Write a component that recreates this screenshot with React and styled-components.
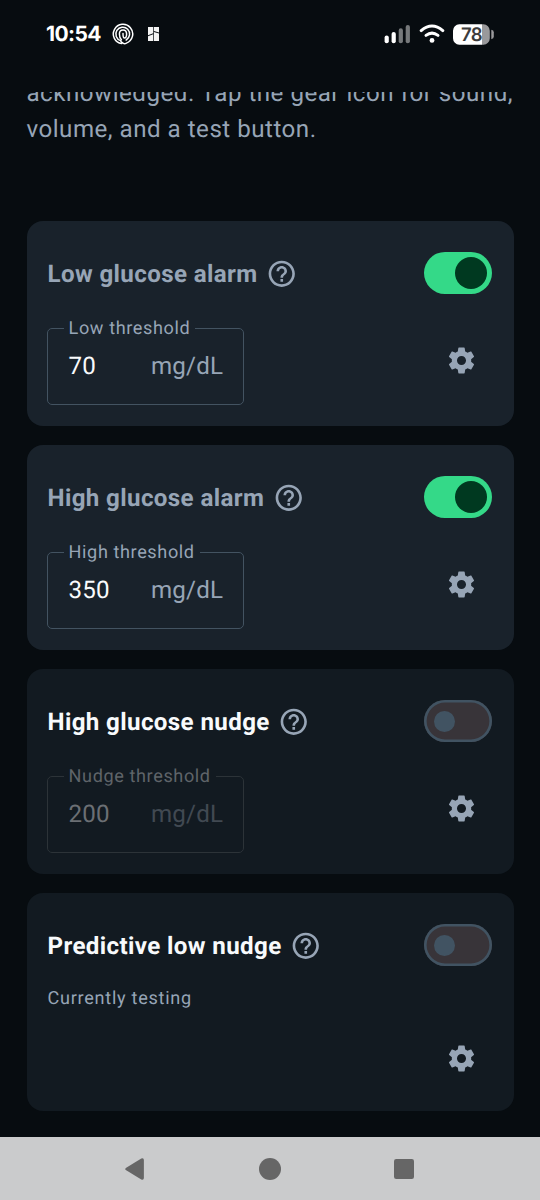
import React from "react";
import styled, { createGlobalStyle } from "styled-components";
import { MdHelpOutline } from "react-icons/md";

const GlobalStyle = createGlobalStyle`
  * { box-sizing: border-box; }
  body {
    margin: 0;
    background: #070c10;
    font-family: Roboto, "Liberation Sans", sans-serif;
    text-rendering: geometricPrecision;
  }
`;

const Screen = styled.div`
  width: 540px;
  height: 1200px;
  display: flex;
  flex-direction: column;
  background: #070c10;
  overflow: hidden;
`;

const StatusBar = styled.header`
  height: 92px;
  flex: none;
  display: flex;
  justify-content: space-between;
  padding: 19px 46px 43px;
`;

const StatusGroup = styled.div`
  display: flex;
  align-items: center;
`;

const Clock = styled.time`
  font-family: Inter, sans-serif;
  font-size: 21px;
  font-weight: 650;
  line-height: 30px;
  width: 65.5px;
  padding-top: 1px;
  letter-spacing: -0.6px;
  color: #fff;
`;

const Content = styled.main`
  flex: 1;
  min-height: 0;
  overflow: hidden;
  padding: 0 26.5px;
`;

const Intro = styled.p`
  margin: -17.5px 0 74.5px;
  font-size: 24.15px;
  line-height: 36px;
  letter-spacing: 0.49px;
  white-space: nowrap;
  color: #97a5b6;
`;

const CardList = styled.div`
  display: flex;
  flex-direction: column;
  gap: 19px;
`;

const Card = styled.section`
  padding: 21px;
  border-radius: 16px;
  background: ${(p) => (p.$on ? "#19222b" : "#121a21")};
`;

const CardHeader = styled.div`
  height: 63px;
  display: flex;
  align-items: center;
  color: #97a5b6;
`;

const Title = styled.h2`
  margin: 1px 8.4px 0 0;
  font-size: 24.15px;
  font-weight: 700;
  line-height: 35px;
  letter-spacing: 0.37px;
  white-space: nowrap;
  color: ${(p) => (p.$on ? "#97a5b6" : "#f8fafc")};
`;

const Track = styled.button`
  margin: 0 0.6px 1px auto;
  border: 0;
  width: 68px;
  height: 42px;
  display: flex;
  align-items: center;
  justify-content: ${(p) => (p.$on ? "flex-end" : "flex-start")};
  padding: ${(p) => (p.$on ? "0 5px" : "0 10.5px")};
  border-radius: 21px;
  background: ${(p) => (p.$on ? "#34d988" : "#383439")};
  box-shadow: ${(p) => (p.$on ? "none" : "inset 0 0 0 2.6px #415362")};
`;

const Thumb = styled.span`
  width: ${(p) => (p.$on ? 32 : 21)}px;
  height: ${(p) => (p.$on ? 32 : 21)}px;
  border-radius: 50%;
  background: ${(p) => (p.$on ? "#003920" : "#415362")};
`;

const CardBody = styled.div`
  margin-top: 11px;
  display: flex;
  align-items: center;
  justify-content: space-between;
`;

const Field = styled.fieldset`
  width: 197px;
  height: 89px;
  margin: 0 0 0 -0.4px;
  padding: 0 20px 0 15.5px;
  border: 1px solid ${(p) => (p.$on ? "#435361" : "#2c3338")};
  border-radius: 5px;
  color: ${(p) => (p.$on ? "#97a5b6" : "#5f6469")};
`;

const FieldLabel = styled.legend`
  padding: 1px 5px 0;
  font-size: 18.1px;
  line-height: 23px;
  letter-spacing: 0.6px;
  white-space: nowrap;
`;

const FieldValue = styled.div`
  display: flex;
  justify-content: space-between;
  padding-left: 5px;
  font-size: 24.15px;
  line-height: 53px;
  letter-spacing: 0.15px;
  color: ${(p) => (p.$on ? "#f8fafc" : "#6b6f74")};
`;

const Unit = styled.span`
  color: ${(p) => (p.$on ? "#97a5b6" : "#414952")};
`;

const GearButton = styled.button`
  width: 63px;
  height: 63px;
  margin-left: auto;
  padding: 0;
  border: 0;
  background: none;
  color: #97a5b6;
  display: grid;
  place-items: center;
`;

const Note = styled.p`
  margin: 10px 0 -21px;
  padding-bottom: 26px;
  font-size: 18.1px;
  line-height: 24px;
  letter-spacing: 0.72px;
  color: #97a5b6;
`;

const NavBar = styled.nav`
  flex: none;
  height: 63px;
  display: flex;
  align-items: center;
  justify-content: center;
  gap: 102px;
  background: #cacbcc;
`;

const Glyph = styled.svg`
  display: block;
  flex: none;
  margin-left: ${(p) => p.$gap || 0}px;
`;

function StatusIcons() {
  return (
    <StatusGroup>
      <Glyph width="26" height="20" viewBox="0 0 26 20" fill="#fff">
        <rect x="0.6" y="11.5" width="4.2" height="7.8" rx="2.1" />
        <rect x="7.6" y="8" width="4.2" height="11.3" rx="2.1" />
        <rect x="14.7" y="4.3" width="4.2" height="15" rx="2.1" opacity=".45" />
        <rect x="21.7" y="1" width="4.2" height="18.3" rx="2.1" opacity=".45" />
      </Glyph>
      <Glyph $gap={8.5} width="26" height="20" viewBox="0 0 26 20" fill="none" stroke="#fff" strokeWidth="3" strokeLinecap="round">
        <path d="M2.2 6.6Q13 -2.6 23.8 6.6" />
        <path d="M7 11.4Q13 6.8 19 11.4" />
        <circle cx="13" cy="16.4" r="2.4" fill="#fff" stroke="none" />
      </Glyph>
      <Glyph $gap={7.5} width="42" height="21" viewBox="0 0 42 21">
        <path d="M7.3 .2H30V20.8H7.3A6.5 6.5 0 0 1 1 14.3V6.7A6.5 6.5 0 0 1 7.3 .2Z" fill="#fff" />
        <path d="M30 .2h1.4A6.5 6.5 0 0 1 37.8 6.7v7.6a6.5 6.5 0 0 1-6.4 6.5H30Z" fill="#99999b" />
        <path d="M39.3 5.8q2.5.5 2.5 2.4v4.6q0 1.9-2.5 2.4Z" fill="#99999b" />
        <text x="19.4" y="17" textAnchor="middle" fontFamily="Inter, sans-serif" fontSize="18.5" fontWeight="600" letterSpacing="-0.8" fill="#3c3c3c">78</text>
      </Glyph>
    </StatusGroup>
  );
}

function NotificationIcons() {
  return (
    <>
      <Glyph width="22" height="22" viewBox="0 0 22 22" fill="none" stroke="#fff" strokeWidth="1.5" strokeLinecap="round">
        <path d="M9.6 20.6A9.7 9.7 0 1 1 14.4 20.1Q12 21.6 10.3 19.6" />
        <path d="M9.6 19.2Q8.8 18.4 8.6 17.6A6.9 6.9 0 1 1 14.2 17" />
        <path d="M9.4 16.8C7.8 15.2 7.4 13.2 7.4 10.9C7.4 8.3 8.6 6.9 11 6.9S14.6 8.5 14.6 11S13.6 15 12.4 15S11 13.4 11 10.4" />
      </Glyph>
      <Glyph $gap={14.5} width="12" height="14" viewBox="0 0 12 14" fill="#f4f4f4">
        <path d="M0 0h5.2v6.2L0 8.2ZM5.9 0H11v5.4L5.9 4ZM0 9.2l5.2-2V14H0ZM5.9 5l5.1 1.5V14H5.9Z" />
      </Glyph>
    </>
  );
}

function GearIcon() {
  return (
    <svg width="31" height="31" viewBox="0 0 24 24" fill="currentColor">
      <path d="M19.43 12.98c.04-.32.07-.64.07-.98s-.03-.66-.07-.98l2.11-1.65c.19-.15.24-.42.12-.64l-2-3.46c-.12-.22-.39-.3-.61-.22l-2.49 1c-.52-.4-1.08-.73-1.69-.98l-.38-2.65C14.46 2.18 14.25 2 14 2h-4c-.25 0-.46.18-.49.42l-.38 2.65c-.61.25-1.17.59-1.69.98l-2.49-1c-.23-.09-.49 0-.61.22l-2 3.46c-.13.22-.07.49.12.64l2.11 1.65c-.04.32-.07.65-.07.98s.03.66.07.98l-2.11 1.65c-.19.15-.24.42-.12.64l2 3.46c.12.22.39.3.61.22l2.49-1c.52.4 1.08.73 1.69.98l.38 2.65c.03.24.24.42.49.42h4c.25 0 .46-.18.49-.42l.38-2.65c.61-.25 1.17-.59 1.69-.98l2.49 1c.23.09.49 0 .61-.22l2-3.46c.12-.22.07-.49-.12-.64l-2.11-1.65zM12 15.5c-1.93 0-3.5-1.57-3.5-3.5s1.57-3.5 3.5-3.5 3.5 1.57 3.5 3.5-1.57 3.5-3.5 3.5z" />
    </svg>
  );
}

function Toggle({ on }) {
  return (
    <Track $on={on} role="switch" aria-checked={on}>
      <Thumb $on={on} />
    </Track>
  );
}

function AlarmCard({ title, on, label, value, note }) {
  return (
    <Card $on={on}>
      <CardHeader>
        <Title $on={on}>{title}</Title>
        <MdHelpOutline size={31.5} />
        <Toggle on={on} />
      </CardHeader>
      {note && <Note>{note}</Note>}
      <CardBody>
        {label && (
          <Field $on={on}>
            <FieldLabel>{label}</FieldLabel>
            <FieldValue $on={on}>
              <span>{value}</span>
              <Unit $on={on}>mg/dL</Unit>
            </FieldValue>
          </Field>
        )}
        <GearButton aria-label="Settings">
          <GearIcon />
        </GearButton>
      </CardBody>
    </Card>
  );
}

const alarms = [
  { title: "Low glucose alarm", on: true, label: "Low threshold", value: 70 },
  { title: "High glucose alarm", on: true, label: "High threshold", value: 350 },
  { title: "High glucose nudge", on: false, label: "Nudge threshold", value: 200 },
  { title: "Predictive low nudge", on: false, note: "Currently testing" },
];

export default function App() {
  return (
    <Screen>
      <GlobalStyle />
      <StatusBar>
        <StatusGroup>
          <Clock>10:54</Clock>
          <NotificationIcons />
        </StatusGroup>
        <StatusIcons />
      </StatusBar>
      <Content>
        <Intro>
          acknowledged. Tap the gear icon for sound,
          <br />
          volume, and a test button.
        </Intro>
        <CardList>
          {alarms.map((alarm) => (
            <AlarmCard key={alarm.title} {...alarm} />
          ))}
        </CardList>
      </Content>
      <NavBar>
        <Glyph width="32" height="32" viewBox="0 0 32 32" fill="#666">
          <path d="M6.2 14.7 21.3 5.5Q23.7 4.4 23.9 7V25Q23.7 27.6 21.3 26.5L6.2 17.3Q4.2 16 6.2 14.7Z" />
        </Glyph>
        <Glyph width="32" height="32" viewBox="0 0 32 32" fill="#666">
          <circle cx="16" cy="16" r="11" />
        </Glyph>
        <Glyph width="32" height="32" viewBox="0 0 32 32" fill="#666">
          <rect x="6" y="6" width="20" height="20" rx="2.2" />
        </Glyph>
      </NavBar>
    </Screen>
  );
}
